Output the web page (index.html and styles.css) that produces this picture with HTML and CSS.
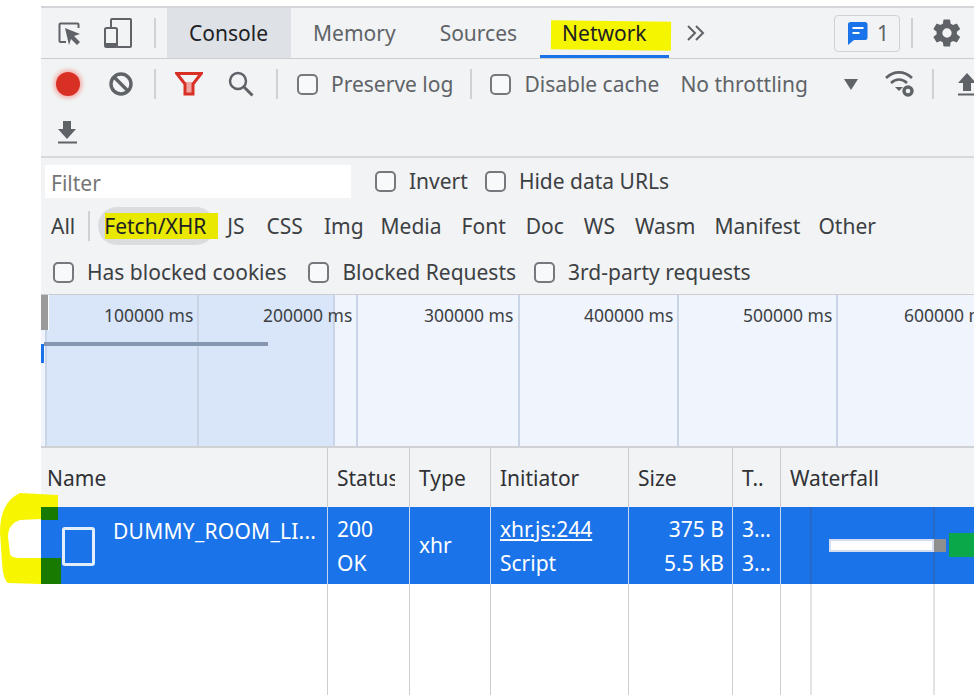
FILE: index.html
```html
<!DOCTYPE html>
<html lang="en">
<head>
<meta charset="utf-8">
<title>DevTools Network</title>
<link rel="stylesheet" href="styles.css">
</head>
<body>
<svg class="marker-c" width="62" height="100" viewBox="0 0 62 100"><path d="M20 1L58 3V28L41 27L20 28Q8 32 8 45L10 62Q11 66 20 66L61 66V92L40 92L8 91Q3 88 2 70L0 40Q0 10 20 1Z" fill="#f7f500"/><rect x="41" y="15" width="17" height="13" fill="#187a00"/><rect x="41" y="66" width="20" height="26" fill="#187a00"/></svg>
<main class="devtools">
  <header class="tabs">
    <div class="icon-btn first"><svg width="30" height="30" viewBox="0 0 30 30"><path d="M12 24H6.500a1 1 0 0 1-1-1V6.500a1 1 0 0 1 1-1h17a1 1 0 0 1 1 1V10" fill="none" stroke="#5f6368" stroke-width="2"/><path d="M11 10l15 6-6 2 6 6-3 3-6-6-2 6z" fill="#5f6368"/></svg></div>
    <div class="icon-btn second"><svg width="30" height="32" viewBox="0 0 30 32"><path d="M8 11V3a1 1 0 0 1 1-1h18a1 1 0 0 1 1 1v26a1 1 0 0 1-1 1H14" fill="none" stroke="#5f6368" stroke-width="2"/><rect x="2" y="11" width="12" height="19" rx="1.500" fill="none" stroke="#5f6368" stroke-width="2"/><rect x="2" y="26" width="12" height="4" fill="#5f6368"/></svg></div>
    <span class="sep tab-sep"></span>
    <div class="tab active">Console</div>
    <div class="tab">Memory</div>
    <div class="tab">Sources</div>
    <div class="tab current"><span class="hl-net"></span><span class="tab-label">Network</span></div>
    <svg class="more" width="18" height="16" viewBox="0 0 18 16"><path d="M1 1l7 7-7 7M9 1l7 7-7 7" fill="none" stroke="#5f6368" stroke-width="2"/></svg>
    <div class="tabs-right">
      <div class="issues"><svg width="20" height="24" viewBox="0 0 20 24"><path d="M3 1h14a2.500 2.500 0 0 1 2.500 2.500v13a2.500 2.500 0 0 1-2.500 2.500H6l-6 5V3.500A2.500 2.500 0 0 1 3 1z" fill="#1a73e8"/><path d="M4.500 7h11M4.500 12h7" stroke="#fff" stroke-width="2"/></svg><span>1</span></div>
      <span class="sep issue-sep"></span>
      <svg class="gear" width="32" height="32" viewBox="0 0 24 24"><path fill="#5f6368" d="M19.400 13c.04-.33.060-.66.060-1s-.02-.67-.07-1l2.150-1.650a.5.5 0 0 0 .12-.65l-2.040-3.500a.5.5 0 0 0-.62-.22l-2.540 1a7.500 7.500 0 0 0-1.730-1L14.350 2.300a.5.5 0 0 0-.5-.43H9.800a.5.5 0 0 0-.5.43l-.38 2.680c-.62.26-1.200.6-1.730 1l-2.540-1a.5.5 0 0 0-.62.22L1.990 8.700a.5.5 0 0 0 .12.65L4.260 11c-.05.33-.08.67-.08 1s.03.67.08 1l-2.150 1.650a.5.5 0 0 0-.12.65l2.040 3.500c.12.22.39.3.62.22l2.540-1c.53.4 1.110.74 1.730 1l.38 2.680c.4.24.25.43.5.43h4.050c.25 0 .46-.19.500-.43l.38-2.680c.62-.26 1.200-.6 1.730-1l2.540 1c.23.08.5 0 .62-.22l2.040-3.500a.5.5 0 0 0-.12-.65zM12 15.500a3.500 3.500 0 1 1 0-7 3.500 3.500 0 0 1 0 7z"/></svg>
    </div>
  </header>

  <section class="toolbar">
    <div class="toolbar-line">
      <span class="record"></span>
      <svg class="clear" width="26" height="26" viewBox="0 0 26 26"><circle cx="13" cy="13" r="10" fill="none" stroke="#5f6368" stroke-width="3.400"/><path d="M6 6l14 14" stroke="#5f6368" stroke-width="3.400"/></svg>
      <span class="sep s1"></span>
      <svg class="funnel" width="28" height="24" viewBox="0 0 28 24"><path d="M9 10h10l-1 12h-8z" fill="#eda6a2"/><path d="M1.800 1.500h24.400L18 12v10h-8V12z" fill="none" stroke="#d93025" stroke-width="3"/></svg>
      <svg class="search" width="28" height="28" viewBox="0 0 28 28"><circle cx="11" cy="11" r="8" fill="none" stroke="#5f6368" stroke-width="2.500"/><path d="M16.500 16.500l9 9" stroke="#5f6368" stroke-width="3"/></svg>
      <span class="sep s2"></span>
      <label class="check preserve"><span class="box"></span>Preserve log</label>
      <span class="sep s3"></span>
      <label class="check disable"><span class="box"></span>Disable cache</label>
      <span class="throttle">No throttling</span>
      <span class="caret"></span>
      <svg class="wifi" width="32" height="28" viewBox="0 0 32 28"><path d="M2 8c8-7.500 18-7.500 26 0M7 13c5-4.500 11-4.500 16 0" fill="none" stroke="#5f6368" stroke-width="2.600"/><path d="M11 17h8l-4 4z" fill="#5f6368"/><circle cx="24" cy="21" r="4" fill="none" stroke="#5f6368" stroke-width="3.400"/></svg>
      <span class="sep s4"></span>
      <svg class="arrow up" width="20" height="24" viewBox="0 0 20 24"><path d="M10 1l9 10h-5v8H6v-8H1z" fill="#5f6368"/><path d="M1 22.500h19" stroke="#5f6368" stroke-width="2"/></svg>
    </div>
    <div class="toolbar-line second-line">
      <svg class="arrow down" width="20" height="24" viewBox="0 0 20 24"><path d="M10 19L1 9h5V1h8v8h5z" fill="#5f6368"/><path d="M1 22.500h19" stroke="#5f6368" stroke-width="2"/></svg>
    </div>
  </section>

  <section class="filters">
    <div class="filter-line line-a">
      <div class="filter-input">Filter</div>
      <label class="check dark invert"><span class="box"></span>Invert</label>
      <label class="check dark hide"><span class="box"></span>Hide data URLs</label>
    </div>
    <div class="filter-line line-b">
      <span class="type first-type">All</span>
      <span class="sep type-sep"></span>
      <span class="type pill"><span class="hl-fetch"></span><span class="tab-label">Fetch/XHR</span></span>
      <span class="type t-js">JS</span>
      <span class="type t-css">CSS</span>
      <span class="type t-img">Img</span>
      <span class="type t-media">Media</span>
      <span class="type">Font</span>
      <span class="type">Doc</span>
      <span class="type t-ws">WS</span>
      <span class="type t-wasm">Wasm</span>
      <span class="type t-man">Manifest</span>
      <span class="type">Other</span>
    </div>
    <div class="filter-line line-c">
      <label class="check dark c1"><span class="box"></span>Has blocked cookies</label>
      <label class="check dark c2"><span class="box"></span>Blocked Requests</label>
      <label class="check dark c3"><span class="box"></span>3rd-party requests</label>
    </div>
  </section>

  <section class="overview">
    <div class="selection"></div>
    <div class="grid-line" style="left:4px"></div>
    <div class="grid-line" style="left:156px"></div>
    <div class="grid-line" style="left:292px"></div>
    <div class="grid-line" style="left:315px"></div>
    <div class="grid-line" style="left:477px"></div>
    <div class="grid-line" style="left:636px"></div>
    <div class="grid-line" style="left:795px"></div>
    <div class="grid-line" style="left:956px"></div>
    <span class="tick" style="left:63px">100000 ms</span>
    <span class="tick" style="left:222px">200000 ms</span>
    <span class="tick" style="left:383px">300000 ms</span>
    <span class="tick" style="left:543px">400000 ms</span>
    <span class="tick" style="left:702px">500000 ms</span>
    <span class="tick tick-cut" style="left:863px">600000 ms</span>
    <div class="handle"></div>
    <div class="blue-tick"></div>
    <div class="track"></div>
  </section>

  <section class="table">
    <div class="th">Name</div>
    <div class="th"><span class="th-cut">Status</span></div>
    <div class="th">Type</div>
    <div class="th">Initiator</div>
    <div class="th">Size</div>
    <div class="th">T..</div>
    <div class="th last">Waterfall</div>

    <div class="td name"><span class="file-icon"></span><span class="file-name">DUMMY_ROOM_LI...</span></div>
    <div class="td stack"><span>200</span><span>OK</span></div>
    <div class="td single">xhr</div>
    <div class="td stack"><span class="link">xhr.js:244</span><span>Script</span></div>
    <div class="td stack right"><span>375 B</span><span>5.5 kB</span></div>
    <div class="td stack"><span>3...</span><span>3...</span></div>
    <div class="td fall">
      <span class="fall-line l1"></span><span class="fall-line l2"></span>
      <span class="bar-white"></span><span class="bar-grey"></span><span class="bar-green"></span>
    </div>

    <div class="empty"></div>
    <div class="empty"></div>
    <div class="empty"></div>
    <div class="empty"></div>
    <div class="empty"></div>
    <div class="empty"></div>
    <div class="empty last"><span class="empty-line e1"></span><span class="empty-line e2"></span></div>
  </section>
</main>
</body>
</html>
```

FILE: styles.css
```css
* { box-sizing: border-box; }
html, body { margin: 0; height: 100%; background: #fff; overflow: hidden; }
body {
  font-family: "Noto Sans", "Open Sans", sans-serif;
  font-size: 21px;
  color: #5f6368;
  position: relative;
}
.devtools {
  margin: 6px 0 0 41px;
  height: 689px;
  display: flex;
  flex-direction: column;
  background: #f1f3f4;
  border-top: 2px solid #d3d5d8;
}
.marker-c { position: absolute; left: 0; top: 492px; z-index: 5; }
.sep { display: block; width: 2px; height: 30px; background: #cfd1d4; flex: none; }

.tabs {
  height: 51px;
  flex: none;
  display: flex;
  align-items: center;
  border-bottom: 1px solid #cbcdd0;
  white-space: nowrap;
}
.icon-btn { flex: none; display: flex; }
.first { margin-left: 13px; }
.second { margin-left: 19px; }
.tab-sep { margin-left: 21px; }
.tab {
  height: 100%;
  padding: 0 22px;
  line-height: 50px;
  position: relative;
  flex: none;
}
.tab.active { background: #dee1e6; color: #202124; margin-left: 11px; padding: 0 22px; width: 124px; }
.tab.current { color: #202124; padding: 0 22px; width: 129px; margin-left: 1px; border-bottom: 3px solid #1a73e8; }
.tab-label { position: relative; }
.hl-net {
  position: absolute; left: 11px; top: 13px; width: 120px; height: 29px;
  background: #f5f500; transform: rotate(0.6deg);
}
.more { margin-left: 18px; flex: none; }
.tabs-right { margin-left: auto; display: flex; align-items: center; }
.issues {
  width: 66px; height: 37px;
  border: 1px solid #cfd1d4;
  border-radius: 4px;
  display: flex; align-items: center; gap: 9px;
  padding-left: 13px;
}
.issue-sep { margin-left: 11px; }
.gear { margin: 0 11px 0 18px; }

.toolbar { height: 99px; flex: none; border-bottom: 2px solid #d6d8db; }
.toolbar-line { height: 52px; padding-bottom: 2px; display: flex; align-items: center; white-space: nowrap; overflow: hidden; }
.second-line { height: 42px; padding: 0 0 0 16px; }
.record {
  width: 24px; height: 24px; border-radius: 50%;
  background: #d93025; box-shadow: 0 0 4px 2px #f3a8a3;
  margin-left: 15px; flex: none;
}
.clear { margin-left: 28px; flex: none; }
.s1 { margin-left: 20px; }
.funnel { margin-left: 19px; flex: none; }
.search { margin-left: 24px; flex: none; }
.s2 { margin-left: 21px; }
.check { display: flex; align-items: center; white-space: nowrap; flex: none; }
.check.dark { color: #3c4043; }
.box {
  width: 21px; height: 21px;
  border: 2px solid #75797d;
  border-radius: 5px;
  background: #f8f9fa;
  margin-right: 13px;
  flex: none;
}
.preserve { margin-left: 19px; }
.s3 { margin-left: 17px; }
.disable { margin-left: 18px; }
.throttle { margin-left: 21px; flex: none; }
.caret {
  margin-left: 36px; flex: none;
  border-left: 7px solid transparent; border-right: 7px solid transparent;
  border-top: 11px solid #5f6368;
}
.wifi { margin-left: 26px; flex: none; }
.s4 { margin-left: 16px; }
.up { margin-left: 23px; flex: none; }

.filters { height: 137px; flex: none; border-bottom: 1px solid #cbcdd0; }
.filter-line { display: flex; align-items: center; white-space: nowrap; color: #3c4043; }
.line-a { height: 46px; padding-left: 4px; }
.filter-input {
  width: 306px; height: 33px; background: #fff;
  padding-left: 6px; line-height: 36px; color: #757575;
}
.invert { margin-left: 24px; }
.hide { margin-left: 17px; }
.line-b { height: 45px; padding: 0 0 1px 10px; }
.type { flex: none; margin-right: 20px; position: relative; }
.first-type { margin-right: 13px; }
.type-sep { width: 2px; height: 30px; margin-right: 8px; }
.pill {
  background: #dadce0; border-radius: 19px; height: 38px;
  padding: 0 6px; line-height: 38px; margin-right: 12px; width: 117px; color: #202124;
}
.hl-fetch {
  position: absolute; left: 7px; top: 6px; width: 113px; height: 26px; background: #e8e800;
}
.t-js { margin-right: 22px; }
.t-css { margin-right: 21px; }
.t-img { margin-right: 17px; }
.t-media { margin-right: 20px; }
.t-wasm { margin-right: 19px; }
.t-man { margin-right: 18px; }
.line-c { height: 46px; padding-left: 12px; }
.c1 { margin-right: 22px; }
.c2 { margin-right: 18px; }

.overview {
  height: 153px; flex: none; position: relative; overflow: hidden;
  background: #f0f4fc;
  border-bottom: 2px solid #cfd1d4;
  color: #3c4043;
  font-size: 17.5px;
}
.selection { position: absolute; left: 4px; top: 0; bottom: 0; width: 289px; background: #d9e5f8; }
.grid-line { position: absolute; top: 0; bottom: 0; width: 2px; background: #c9d5e6; }
.tick { position: absolute; top: 7px; line-height: 26px; white-space: nowrap; }
.handle { position: absolute; left: 0; top: 0; width: 8px; height: 35px; background: #9a9a9a; border-right: 1px solid #fff; }
.blue-tick { position: absolute; left: 0; top: 49px; width: 3px; height: 19px; background: #1a73e8; }
.track { position: absolute; left: 3px; top: 47px; width: 224px; height: 4px; background: #8496b0; }

.table {
  flex: 1;
  display: grid;
  grid-template-columns: 287px 82px 81px 138px 104px 48px 1fr;
  grid-template-rows: 59px 77px 1fr;
  color: #3c4043;
}
.th {
  background: #f1f3f4;
  border-right: 1px solid #cbcdd0;
  padding-left: 6px; line-height: 60px; white-space: nowrap; overflow: hidden; color: #303134;
}
.th:nth-child(n+2) { padding-left: 9px; }
.th.last { border-right: 0; }
.th-cut { display: block; width: 58px; overflow: hidden; }
.td {
  background: #1a73e8; color: #fff;
  border-right: 1px solid #c5d6f0;
  padding-left: 9px;
  white-space: nowrap;
  overflow: hidden;
}
.name { display: flex; padding: 0 0 0 21px; position: relative; }
.file-icon { width: 33px; height: 39px; border: 3px solid #e3eefc; border-radius: 3px; background: transparent; margin-top: 20px; flex: none; }
.file-name { margin-left: 18px; line-height: 48px; letter-spacing: 0.25px; }
.stack { display: flex; flex-direction: column; justify-content: center; gap: 0; line-height: 34px; }
.single { line-height: 77px; }
.link { text-decoration: underline; }
.right { align-items: flex-end; padding: 0 8px 0 0; }
.fall { position: relative; border-right: 0; }
.fall-line { position: absolute; top: 0; bottom: 0; width: 2px; background: #2a68c8; }
.l1 { left: 29px; }
.l2 { left: 152px; }
.bar-white { position: absolute; left: 48px; top: 32px; width: 105px; height: 13px; background: #fff; border: 2px solid #d5def0; }
.bar-grey { position: absolute; left: 153px; top: 32px; width: 12px; height: 13px; background: #8f8f8f; }
.bar-green { position: absolute; left: 168px; top: 26px; width: 30px; height: 24px; background: #0ba84a; }
.empty { background: #fff; border-right: 1px solid #cbcdd0; }
.empty.last { border-right: 0; position: relative; }
.empty-line { position: absolute; top: 0; bottom: 0; width: 2px; background: #e3e4e6; }
.e1 { left: 29px; }
.e2 { left: 152px; }
```
